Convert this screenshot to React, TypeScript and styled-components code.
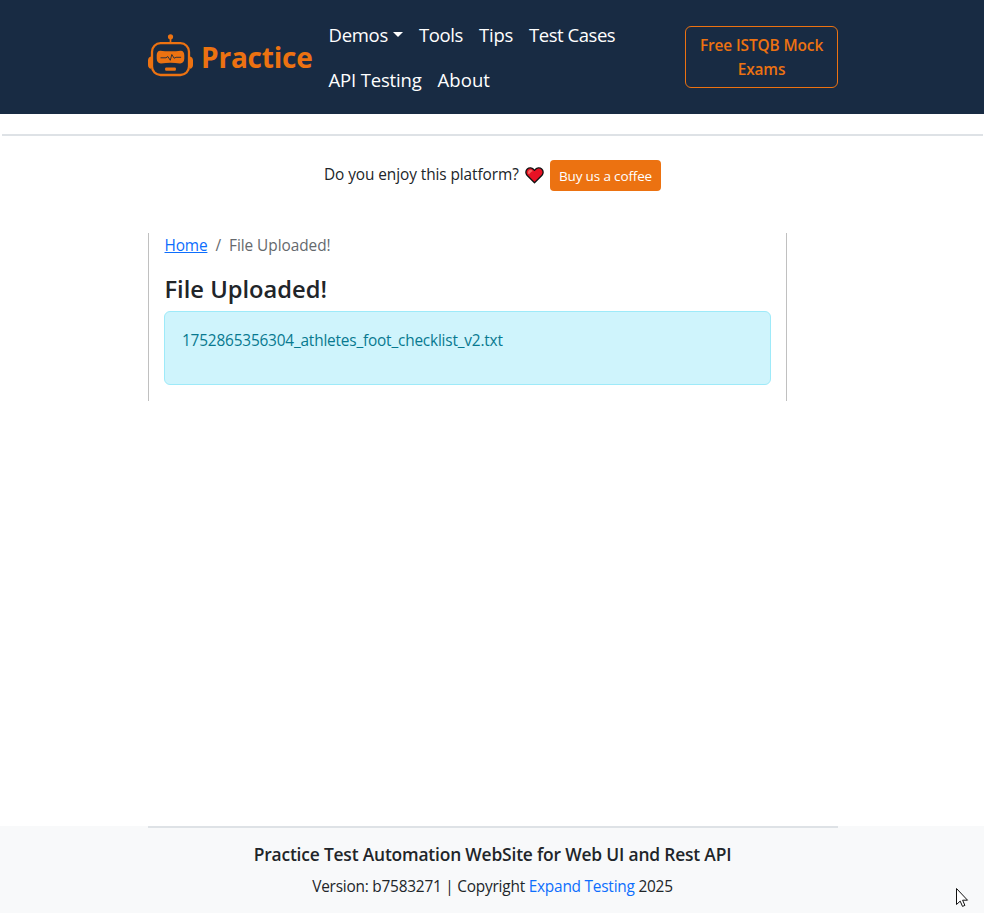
import React from "react";
import styled, { createGlobalStyle } from "styled-components";

const orange = "#ec7211";
const navy = "#182b43";

const GlobalStyle = createGlobalStyle`
  *, *::before, *::after { box-sizing: border-box; }
  body {
    margin: 0;
    background: #fff;
    color: #212529;
    font-family: "Open Sans", "Noto Sans", sans-serif;
    font-size: 15.4px;
    line-height: 24px;
    overflow: hidden;
  }
`;

const Page = styled.div`
  display: flex;
  flex-direction: column;
  height: 913px;
`;

const Navbar = styled.header`
  height: 114px;
  padding: 12px 146px 12px 148px;
  background: ${navy};
  display: flex;
  align-items: center;
  flex-shrink: 0;
`;

const Brand = styled.a`
  display: flex;
  align-items: center;
  gap: 8px;
  width: 172.5px;
  color: ${orange};
  font-size: 28px;
  font-weight: 700;
  line-height: 42px;
  letter-spacing: -0.2px;
  white-space: nowrap;
`;

const Logo = styled.svg`
  width: 45px;
  height: 43px;
  flex-shrink: 0;
  margin-top: -3px;
`;

const Menu = styled.nav`
  display: flex;
  flex-wrap: wrap;
  width: 356px;
`;

const MenuLink = styled.a<{ $tracking: number }>`
  display: flex;
  align-items: center;
  height: 45px;
  padding: 0 8px;
  color: #fff;
  font-size: 18.5px;
  letter-spacing: ${(p) => p.$tracking}px;
  white-space: nowrap;
`;

const Caret = styled.span`
  margin: 0 0 0 5px;
  border: 5.5px solid transparent;
  border-top-color: #fff;
  border-bottom: 0;
`;

const ExamsButton = styled.a`
  width: 153px;
  height: 62px;
  margin-left: auto;
  padding: 7px 12px 5px;
  border: 1px solid ${orange};
  border-radius: 6px;
  color: ${orange};
  font-weight: 600;
  letter-spacing: -0.1px;
  text-align: center;
`;

const Rule = styled.hr`
  width: 981px;
  height: 2px;
  margin: 20px 0 0 2px;
  border: 0;
  background: #dee2e6;
  flex-shrink: 0;
`;

const Support = styled.section`
  display: flex;
  align-items: center;
  height: 31px;
  margin: 24px 0 42px 324px;
  letter-spacing: -0.08px;
  white-space: nowrap;
`;

const Question = styled.span`
  width: 201px;
  padding-bottom: 1px;
`;

const Heart = styled.svg`
  width: 19px;
  height: 17px;
  margin: 0 6px 1px 0;
`;

const CoffeeButton = styled.a`
  width: 111px;
  height: 31px;
  padding-top: 1px;
  border-radius: 4px;
  background: ${orange};
  color: #fff;
  font-size: 13.5px;
  line-height: 31px;
  letter-spacing: -0.15px;
  text-align: center;
`;

const Main = styled.main`
  width: 639px;
  height: 168px;
  margin-left: 148px;
  padding: 1px 15px 0;
  border: solid #c0c0c0;
  border-width: 0 1px;
`;

const Breadcrumb = styled.div`
  display: flex;
  gap: 8px;
  padding-left: 0.5px;
  color: #65696d;
  letter-spacing: -0.05px;
`;

const HomeLink = styled.a`
  color: #0d6efd;
  text-decoration: underline;
  text-underline-offset: 1px;
  letter-spacing: -0.15px;
`;

const Title = styled.h1`
  margin: 16px 0 7px 0.5px;
  font-size: 23.7px;
  font-weight: 600;
  line-height: 30px;
`;

const Alert = styled.div`
  height: 74px;
  padding: 17px;
  border: 1px solid #9eeaf9;
  border-radius: 6px;
  background: #cff4fc;
  color: #087990;
  letter-spacing: -0.19px;
`;

const Footer = styled.footer`
  height: 87px;
  margin-top: auto;
  padding: 0 146px 0 148px;
  background: #f8f9fa;
  text-align: center;
`;

const FooterTitle = styled.h2`
  margin: 0;
  padding: 14px 1px 0 0;
  border-top: 2px solid #dee2e6;
  font-size: 17.4px;
  font-weight: 600;
  line-height: 24px;
  letter-spacing: -0.18px;
`;

const FooterText = styled.p`
  margin: 9px 0 0;
  padding-right: 1px;
  letter-spacing: -0.22px;
`;

const FooterLink = styled.a`
  color: #0d6efd;
`;

const Pointer = styled.svg`
  position: absolute;
  left: 955px;
  top: 887px;
  width: 14px;
  height: 21px;
`;

const links = [
  { label: "Demos", tracking: -0.28, caret: true },
  { label: "Tools", tracking: -0.38 },
  { label: "Tips", tracking: -0.25 },
  { label: "Test Cases", tracking: -0.46 },
  { label: "API Testing", tracking: -0.16 },
  { label: "About", tracking: 0.05 },
];

function RobotLogo() {
  return (
    <Logo viewBox="0 0 45 43" fill="none">
      <circle cx="22.5" cy="2.8" r="2.6" fill={orange} />
      <path d="M22.5 4v5" stroke={orange} strokeWidth="1.7" />
      <rect x="4" y="9.2" width="37" height="31.8" rx="8.5" stroke={orange} strokeWidth="2.3" />
      <path d="M3 22.5v12.3C1.2 34.6 0 33 0 31v-4.500c0-2.200 1.200-3.800 3-4zM42 22.500v12.300c1.800-.2 3-1.800 3-3.800v-4.500c0-2.200-1.200-3.800-3-4z" fill={orange} />
      <path d="M12.500 16.700c5 .8 15 .8 20 0 2.400-.2 3.800 1.700 3.800 4.500v3.300c0 3.200-1.700 5.100-4.500 4.900-6-.8-12.600-.8-18.600 0-2.800.2-4.500-1.700-4.500-4.900v-3.300c0-2.800 1.400-4.700 3.800-4.500z" fill={orange} />
      <path d="M12.500 23.800h5.500l1.800-1.300 2.500 3.800 1.500-5.800 2.300 3.700 2-.9h5" stroke={navy} strokeWidth="0.9" strokeLinejoin="round" />
      <rect x="17.1" y="33.6" width="10.800" height="3.100" rx="1" fill={orange} />
    </Logo>
  );
}

export default function App() {
  return (
    <>
      <GlobalStyle />
      <Page>
        <Navbar>
          <Brand>
            <RobotLogo />
            Practice
          </Brand>
          <Menu>
            {links.map((link) => (
              <MenuLink key={link.label} $tracking={link.tracking}>
                {link.label}
                {link.caret && <Caret />}
              </MenuLink>
            ))}
          </Menu>
          <ExamsButton>Free ISTQB Mock Exams</ExamsButton>
        </Navbar>
        <Rule />
        <Support>
          <Question>Do you enjoy this platform?</Question>
          <Heart viewBox="0 0 19 17">
            <path
              d="M9.500 15.800 2 8.300C.3 6.400.6 3.500 2.300 2 4.200.3 7.200.5 9.500 3.300 11.800.5 14.800.3 16.700 2c1.700 1.500 2 4.400.3 6.300z"
              fill="#e81224"
              stroke="#111"
              strokeWidth="1.3"
              strokeLinejoin="round"
            />
            <path d="M3 6.500C2.600 4 4 2.500 6 2.700c1 .1 1.700.8 1.600 1.500C5.800 4.400 5.300 6 4.200 7.300z" fill="#f4665f" />
          </Heart>
          <CoffeeButton>Buy us a coffee</CoffeeButton>
        </Support>
        <Main>
          <Breadcrumb>
            <HomeLink>Home</HomeLink>
            <span>/</span>
            <span>File Uploaded!</span>
          </Breadcrumb>
          <Title>File Uploaded!</Title>
          <Alert>1752865356304_athletes_foot_checklist_v2.txt</Alert>
        </Main>
        <Footer>
          <FooterTitle>Practice Test Automation WebSite for Web UI and Rest API</FooterTitle>
          <FooterText>
            Version: b7583271 | Copyright <FooterLink>Expand Testing</FooterLink> 2025
          </FooterText>
        </Footer>
      </Page>
      <Pointer viewBox="0 0 14 21">
        <path d="M1.500 1.500v16l3.700-3.400 2.300 5.300 2.400-1-2.300-5.200h4.900z" fill="#fff" stroke="#111" strokeWidth="1" />
      </Pointer>
    </>
  );
}
